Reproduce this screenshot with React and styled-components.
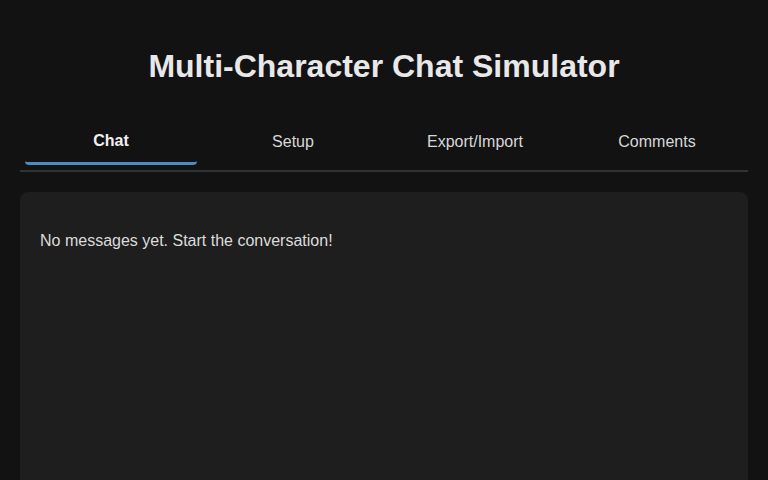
import React, { useState } from 'react'
import styled, { createGlobalStyle } from 'styled-components'

const GlobalStyle = createGlobalStyle`
  html, body {
    margin: 0;
    padding: 0;
    background-color: #121212;
    color: #e0e0e0;
    font-family: "Liberation Sans", Arial, sans-serif;
  }
`

const Page = styled.div`
  box-sizing: border-box;
  min-height: 100vh;
  padding: 20px;
`

const Title = styled.h1`
  font-size: 32px;
  font-weight: bold;
  text-align: center;
  color: #e8e8e8;
  margin: 28px 0 30px;
  line-height: 37px;
`

const TabList = styled.div`
  display: flex;
  border-bottom: 2px solid #333;
  margin-bottom: 20px;
`

const Tab = styled.button`
  flex: 1;
  margin: 5px;
  padding: ${p => (p.$active ? '12px 0 12px' : '13px 0 11px')};
  background: none;
  border: none;
  border-bottom: 3px solid ${p => (p.$active ? '#4a8cc4' : 'transparent')};
  border-radius: 4px;
  font-family: inherit;
  font-size: 16px;
  line-height: 18px;
  font-weight: ${p => (p.$active ? 'bold' : 'normal')};
  color: ${p => (p.$active ? '#f0f0f0' : '#d8d8d8')};
  cursor: pointer;
`

const Panel = styled.div`
  background-color: #1e1e1e;
  border-radius: 8px;
  padding: 20px;
  min-height: 300px;
`

const Empty = styled.p`
  margin: 17px 0 16px;
  font-size: 16px;
  line-height: 24px;
  color: #dcdcdc;
`

const tabs = ['Chat', 'Setup', 'Export/Import', 'Comments']

export default function App() {
  const [active, setActive] = useState('Chat')
  return (
    <Page>
      <GlobalStyle />
      <Title>Multi-Character Chat Simulator</Title>
      <TabList>
        {tabs.map(t => (
          <Tab key={t} $active={t === active} onClick={() => setActive(t)}>
            {t}
          </Tab>
        ))}
      </TabList>
      <Panel>
        <Empty>No messages yet. Start the conversation!</Empty>
      </Panel>
    </Page>
  )
}
